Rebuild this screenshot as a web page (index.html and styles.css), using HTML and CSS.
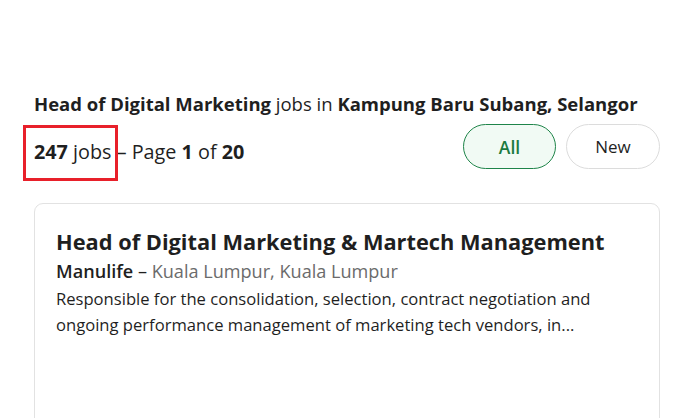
FILE: index.html
```html
<!DOCTYPE html>
<html lang="en">
<head>
<meta charset="utf-8">
<title>Jobs</title>
<link rel="stylesheet" href="styles.css">
</head>
<body>
<main class="page">
  <h1 class="heading"><strong>Head of Digital Marketing</strong> jobs in <strong>Kampung Baru Subang, Selangor</strong></h1>
  <div class="summary-row">
    <p class="summary"><span class="count"><strong>247</strong> jobs</span> – Page <strong>1</strong> of <strong>20</strong></p>
    <div class="filters">
      <button class="pill pill-active">All</button>
      <button class="pill">New</button>
    </div>
  </div>
  <article class="card">
    <h2 class="card-title">Head of Digital Marketing &amp; Martech Management</h2>
    <p class="card-meta"><span class="company">Manulife</span> – <span class="location">Kuala Lumpur, Kuala Lumpur</span></p>
    <p class="card-desc">Responsible for the consolidation, selection, contract negotiation and ongoing performance management of marketing tech vendors, in...</p>
  </article>
</main>
</body>
</html>
```
FILE: styles.css
```css
html, body {
  margin: 0;
  padding: 0;
  background: #ffffff;
}
html { overflow: hidden; }
body {
  font-family: "Open Sans", "Noto Sans", sans-serif;
  color: #1f1f1f;
  overflow: hidden;
  height: 418px;
}
.page {
  width: 626px;
  margin-left: 34px;
  padding-top: 91px;
}
.heading {
  margin: 0;
  font-size: 18.5px;
  font-weight: 400;
  line-height: 26px;
  color: #1f1f1f;
  white-space: nowrap;
}
.heading strong { font-weight: 700; }
.summary-row {
  display: flex;
  justify-content: space-between;
  align-items: flex-end;
  margin-top: 7px;
}
.summary {
  margin: 0 0 5px;
  font-size: 19.8px;
  line-height: 24px;
  color: #1f1f1f;
  white-space: nowrap;
}
.summary strong { font-weight: 700; }
.count {
  position: relative;
}
.count::after {
  content: "";
  position: absolute;
  left: -11px;
  right: -6px;
  top: -13px;
  bottom: -16px;
  border: 3px solid #e8202a;
}
.filters {
  display: flex;
  gap: 10px;
}
.pill {
  font-family: inherit;
  width: 94px;
  height: 45px;
  border-radius: 23px;
  border: 1px solid #dcdcdc;
  background: #ffffff;
  color: #1f1f1f;
  font-size: 17px;
  padding: 0;
}
.pill-active {
  width: 93px;
  border-color: #1e8449;
  background: #f1faf4;
  color: #1b7a3f;
  font-weight: 600;
  font-size: 17.5px;
}
.card {
  margin-top: 34px;
  border: 1px solid #e2e2e2;
  border-radius: 9px;
  padding: 24px 21px 40px;
  height: 180px;
}
.card-title {
  margin: 0;
  font-size: 21.8px;
  font-weight: 700;
  line-height: 28px;
  color: #1f1f1f;
}
.card-meta {
  margin: 3px 0 0;
  font-size: 18.1px;
  line-height: 24px;
  white-space: nowrap;
}
.company { font-weight: 600; color: #1f1f1f; }
.location { color: #6b6b6b; }
.card-desc {
  margin: 3px 0 0;
  font-size: 16.6px;
  line-height: 26px;
  color: #1f1f1f;
  width: 560px;
}
```
